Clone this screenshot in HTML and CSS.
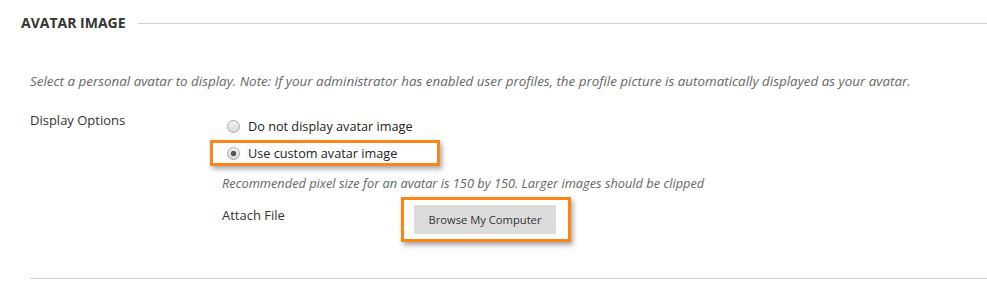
FILE: index.html
```html
<!DOCTYPE html>
<html lang="en">
<head>
    <meta charset="UTF-8">
    <meta name="viewport" content="width=device-width, initial-scale=1.0">
    <title>Avatar Image</title>
    <link rel="stylesheet" href="styles.css">
</head>
<body>
    <div class="section">
        <div class="section-head">
            <h2>Avatar Image</h2>
            <span class="rule"></span>
        </div>
        <div class="section-body">
            <p class="instructions">Select a personal avatar to display. Note: If your administrator has enabled user profiles, the profile picture is automatically displayed as your avatar.</p>
            <div class="field">
                <div class="field-label">Display Options</div>
                <div class="field-control">
                    <label class="option">
                        <input type="radio" name="avatar">
                        <span>Do not display avatar image</span>
                    </label>
                    <label class="option option-callout">
                        <input type="radio" name="avatar" checked>
                        <span>Use custom avatar image</span>
                    </label>
                    <p class="hint">Recommended pixel size for an avatar is 150 by 150. Larger images should be clipped</p>
                    <div class="attach">
                        <span class="attach-label">Attach File</span>
                        <span class="callout">
                            <button type="button" class="browse-button">Browse My Computer</button>
                        </span>
                    </div>
                </div>
            </div>
            <div class="section-foot"></div>
        </div>
    </div>
</body>
</html>
```

FILE: styles.css
```css
* {
    margin: 0;
    padding: 0;
    box-sizing: border-box;
    font-family: 'Open Sans', 'Liberation Sans', sans-serif;
}

body {
    background: #fff;
    color: #333;
    width: 987px;
    height: 295px;
    overflow: hidden;
}

.section-head {
    display: flex;
    align-items: center;
    padding: 13px 0 0 21px;
}

.section-head h2 {
    font-size: 14px;
    font-weight: 700;
    line-height: 20px;
    text-transform: uppercase;
    color: #333;
}

.rule {
    flex: 1;
    height: 1px;
    margin-left: 12px;
    background: #d0d0d0;
}

.section-body {
    padding-left: 30px;
}

.instructions {
    margin-top: 39px;
    font-size: 13.4px;
    font-style: italic;
    line-height: 18px;
    color: #666;
}

.field {
    display: flex;
    margin-top: 21px;
}

.field-label {
    width: 192px;
    font-size: 13px;
    line-height: 18px;
}

.field-control {
    padding-top: 5px;
}

.option {
    display: flex;
    align-items: center;
    height: 20px;
    padding-left: 5px;
    font-size: 12.7px;
    color: #222;
}

.option + .option {
    margin-top: 4px;
}

.option input {
    appearance: none;
    width: 13px;
    height: 13px;
    margin-right: 8px;
    border: 1px solid #a8a8a8;
    border-radius: 50%;
    background: linear-gradient(#f4f4f4, #d8d8d8);
}

.option input:checked {
    background: radial-gradient(circle, #555 0, #555 2.5px, transparent 3px), linear-gradient(#f4f4f4, #d8d8d8);
}

.option-callout {
    width: 230px;
    height: 26px;
    margin-left: -12px;
    padding-left: 14px;
    border: 3px solid #fb8517;
    box-shadow: 2px 3px 5px rgba(0, 0, 0, 0.35);
}

.hint {
    margin-top: 8px;
    font-size: 12.8px;
    font-style: italic;
    line-height: 18px;
    color: #666;
}

.attach {
    display: flex;
    align-items: flex-start;
    margin-top: 5px;
}

.attach-label {
    width: 179px;
    padding-top: 9px;
    font-size: 13px;
    line-height: 18px;
}

.callout {
    display: inline-block;
    padding: 5px 12px 5px 10px;
    border: 3px solid #fb8517;
    box-shadow: 2px 3px 5px rgba(0, 0, 0, 0.35);
}

.browse-button {
    display: block;
    width: 142px;
    height: 29px;
    border: none;
    background: #dcdcdc;
    color: #333;
    font-size: 11.2px;
}

.section-foot {
    height: 1px;
    margin-top: 36px;
    background: #d0d0d0;
}
```
